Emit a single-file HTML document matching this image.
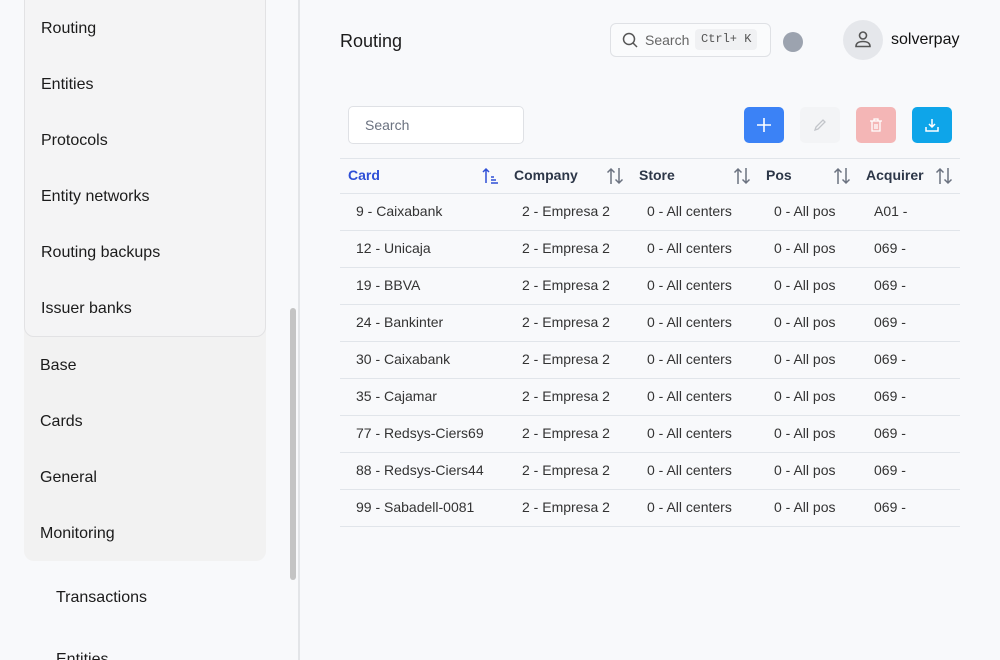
<!DOCTYPE html>
<html><head><style>
*{box-sizing:border-box;margin:0;padding:0}
html,body{width:1000px;height:660px;overflow:hidden}
body{background:#f8f9fb;font-family:"Liberation Sans",sans-serif;color:#1f2328;position:relative}
.abs{position:absolute}
.side{left:0;top:0;width:300px;height:660px;border-right:2px solid #e3e5e8}
.outer{left:24px;top:0;width:242px;height:561px;background:#f2f2f2;border-radius:0 0 10px 10px}
.inner{left:24px;top:-10px;width:242px;height:347px;background:#f4f4f5;border:1px solid #e2e2e4;border-radius:10px}
.it{position:absolute;font-size:16px;color:#1b1b1b}
.sb{left:290px;top:308px;width:6px;height:272px;background:#c4c4c4;border-radius:3px}
.th{position:absolute;top:167px;font-size:14px;font-weight:bold;color:#2d3748}
.td{position:absolute;font-size:14px;color:#333}
.line{position:absolute;left:340px;width:620px;height:1px;background:#e1e5ea}
.btn{position:absolute;top:107px;width:40px;height:36px;border-radius:5px;display:flex;align-items:center;justify-content:center}
</style></head><body>
<div class="abs side"></div>
<div class="abs outer"></div>
<div class="abs inner"></div>
<div class="it" style="left:41px;top:20px">Routing</div>
<div class="it" style="left:41px;top:76px">Entities</div>
<div class="it" style="left:41px;top:132px">Protocols</div>
<div class="it" style="left:41px;top:188px">Entity networks</div>
<div class="it" style="left:41px;top:244px">Routing backups</div>
<div class="it" style="left:41px;top:300px">Issuer banks</div>
<div class="it" style="left:40px;top:357px">Base</div>
<div class="it" style="left:40px;top:413px">Cards</div>
<div class="it" style="left:40px;top:469px">General</div>
<div class="it" style="left:40px;top:525px">Monitoring</div>
<div class="it" style="left:56px;top:589px">Transactions</div>
<div class="it" style="left:56px;top:651px">Entities</div>
<div class="abs sb"></div>

<div class="abs" style="left:340px;top:31px;font-size:18px;color:#1b1b1b">Routing</div>
<div class="abs" style="left:610px;top:23px;width:161px;height:34px;border:1px solid #dfe1e5;border-radius:6px;background:#fafbfc"></div>
<svg class="abs" style="left:621px;top:31px" width="18" height="18" viewBox="0 0 18 18" fill="none" stroke="#555" stroke-width="1.5"><circle cx="8" cy="8" r="5.5"/><path d="M12 12l4 4"/></svg>
<div class="abs" style="left:645px;top:32px;font-size:14px;color:#666">Search</div>
<div class="abs" style="left:695px;top:29px;width:62px;height:21px;background:#f0f1f3;border-radius:4px;font-family:'Liberation Mono',monospace;font-size:12px;color:#555;padding:3px 0 0 6px">Ctrl+ K</div>
<div class="abs" style="left:783px;top:32px;width:20px;height:20px;border-radius:50%;background:#9ca3af"></div>
<div class="abs" style="left:843px;top:20px;width:40px;height:40px;border-radius:50%;background:#e5e7eb"></div>
<svg class="abs" style="left:853px;top:29px" width="20" height="20" viewBox="0 0 20 20" fill="none" stroke="#555" stroke-width="1.6"><circle cx="10" cy="6.5" r="3.5"/><path d="M3 17.5c0-3.5 3-5 7-5s7 1.5 7 5z"/></svg>
<div class="abs" style="left:891px;top:31px;font-size:16px;color:#111">solverpay</div>

<div class="abs" style="left:348px;top:106px;width:176px;height:38px;border:1px solid #dfe1e5;border-radius:5px;background:#fff;font-size:14px;color:#6b7280;padding:10px 0 0 16px">Search</div>
<div class="btn" style="left:744px;background:#3b82f6"><svg width="16" height="16" viewBox="0 0 16 16" stroke="#fff" stroke-width="1.6"><path d="M8 1v14M1 8h14"/></svg></div>
<div class="btn" style="left:800px;background:#f3f4f6"><svg width="16" height="16" viewBox="0 0 16 16" fill="none" stroke="#c2c5ca" stroke-width="1.3"><path d="M3 13l1-3 7-7 2 2-7 7z"/></svg></div>
<div class="btn" style="left:856px;background:#f4b6b6"><svg width="16" height="16" viewBox="0 0 16 16" fill="none" stroke="#fff" stroke-width="1.3"><path d="M2 4h12M6 4V2h4v2M4 4v10h8V4M7 7v5M9 7v5"/></svg></div>
<div class="btn" style="left:912px;background:#0ea5e9"><svg width="16" height="16" viewBox="0 0 16 16" fill="none" stroke="#fff" stroke-width="1.5"><path d="M8 2v8M5 7l3 3 3-3M2 10v4h12v-4"/></svg></div>

<div class="line" style="top:158px"></div>
<div class="th" style="left:348px;color:#2e4fd6">Card</div>
<div class="th" style="left:514px">Company</div>
<div class="th" style="left:639px">Store</div>
<div class="th" style="left:766px">Pos</div>
<div class="th" style="left:866px">Acquirer</div>
<svg class="abs" style="left:481px;top:167px" width="18" height="18" viewBox="0 0 18 18" fill="none" stroke="#2e4fd6" stroke-width="1.5"><path d="M5 16V2M2 5l3-3 3 3M10 10h3M10 13h5M10 16h7"/></svg>
<svg class="abs" style="left:606px;top:167px" width="18" height="18" viewBox="0 0 18 18" fill="none" stroke="#6b7280" stroke-width="1.5"><path d="M5 17V2M1.5 5.5L5 2l3.5 3.5M13 1v15M9.5 12.5L13 16l3.5-3.5"/></svg>
<svg class="abs" style="left:733px;top:167px" width="18" height="18" viewBox="0 0 18 18" fill="none" stroke="#6b7280" stroke-width="1.5"><path d="M5 17V2M1.5 5.5L5 2l3.5 3.5M13 1v15M9.5 12.5L13 16l3.5-3.5"/></svg>
<svg class="abs" style="left:833px;top:167px" width="18" height="18" viewBox="0 0 18 18" fill="none" stroke="#6b7280" stroke-width="1.5"><path d="M5 17V2M1.5 5.5L5 2l3.5 3.5M13 1v15M9.5 12.5L13 16l3.5-3.5"/></svg>
<svg class="abs" style="left:935px;top:167px" width="18" height="18" viewBox="0 0 18 18" fill="none" stroke="#6b7280" stroke-width="1.5"><path d="M5 17V2M1.5 5.5L5 2l3.5 3.5M13 1v15M9.5 12.5L13 16l3.5-3.5"/></svg>
<div class="line" style="top:193px"></div>

<div class="td" style="left:356px;top:203px">9 - Caixabank</div><div class="td" style="left:522px;top:203px">2 - Empresa 2</div><div class="td" style="left:647px;top:203px">0 - All centers</div><div class="td" style="left:774px;top:203px">0 - All pos</div><div class="td" style="left:874px;top:203px">A01 -</div><div class="line" style="top:230px"></div>
<div class="td" style="left:356px;top:240px">12 - Unicaja</div><div class="td" style="left:522px;top:240px">2 - Empresa 2</div><div class="td" style="left:647px;top:240px">0 - All centers</div><div class="td" style="left:774px;top:240px">0 - All pos</div><div class="td" style="left:874px;top:240px">069 -</div><div class="line" style="top:267px"></div>
<div class="td" style="left:356px;top:277px">19 - BBVA</div><div class="td" style="left:522px;top:277px">2 - Empresa 2</div><div class="td" style="left:647px;top:277px">0 - All centers</div><div class="td" style="left:774px;top:277px">0 - All pos</div><div class="td" style="left:874px;top:277px">069 -</div><div class="line" style="top:304px"></div>
<div class="td" style="left:356px;top:314px">24 - Bankinter</div><div class="td" style="left:522px;top:314px">2 - Empresa 2</div><div class="td" style="left:647px;top:314px">0 - All centers</div><div class="td" style="left:774px;top:314px">0 - All pos</div><div class="td" style="left:874px;top:314px">069 -</div><div class="line" style="top:341px"></div>
<div class="td" style="left:356px;top:351px">30 - Caixabank</div><div class="td" style="left:522px;top:351px">2 - Empresa 2</div><div class="td" style="left:647px;top:351px">0 - All centers</div><div class="td" style="left:774px;top:351px">0 - All pos</div><div class="td" style="left:874px;top:351px">069 -</div><div class="line" style="top:378px"></div>
<div class="td" style="left:356px;top:388px">35 - Cajamar</div><div class="td" style="left:522px;top:388px">2 - Empresa 2</div><div class="td" style="left:647px;top:388px">0 - All centers</div><div class="td" style="left:774px;top:388px">0 - All pos</div><div class="td" style="left:874px;top:388px">069 -</div><div class="line" style="top:415px"></div>
<div class="td" style="left:356px;top:425px">77 - Redsys-Ciers69</div><div class="td" style="left:522px;top:425px">2 - Empresa 2</div><div class="td" style="left:647px;top:425px">0 - All centers</div><div class="td" style="left:774px;top:425px">0 - All pos</div><div class="td" style="left:874px;top:425px">069 -</div><div class="line" style="top:452px"></div>
<div class="td" style="left:356px;top:462px">88 - Redsys-Ciers44</div><div class="td" style="left:522px;top:462px">2 - Empresa 2</div><div class="td" style="left:647px;top:462px">0 - All centers</div><div class="td" style="left:774px;top:462px">0 - All pos</div><div class="td" style="left:874px;top:462px">069 -</div><div class="line" style="top:489px"></div>
<div class="td" style="left:356px;top:499px">99 - Sabadell-0081</div><div class="td" style="left:522px;top:499px">2 - Empresa 2</div><div class="td" style="left:647px;top:499px">0 - All centers</div><div class="td" style="left:774px;top:499px">0 - All pos</div><div class="td" style="left:874px;top:499px">069 -</div><div class="line" style="top:526px"></div>
</body></html>
